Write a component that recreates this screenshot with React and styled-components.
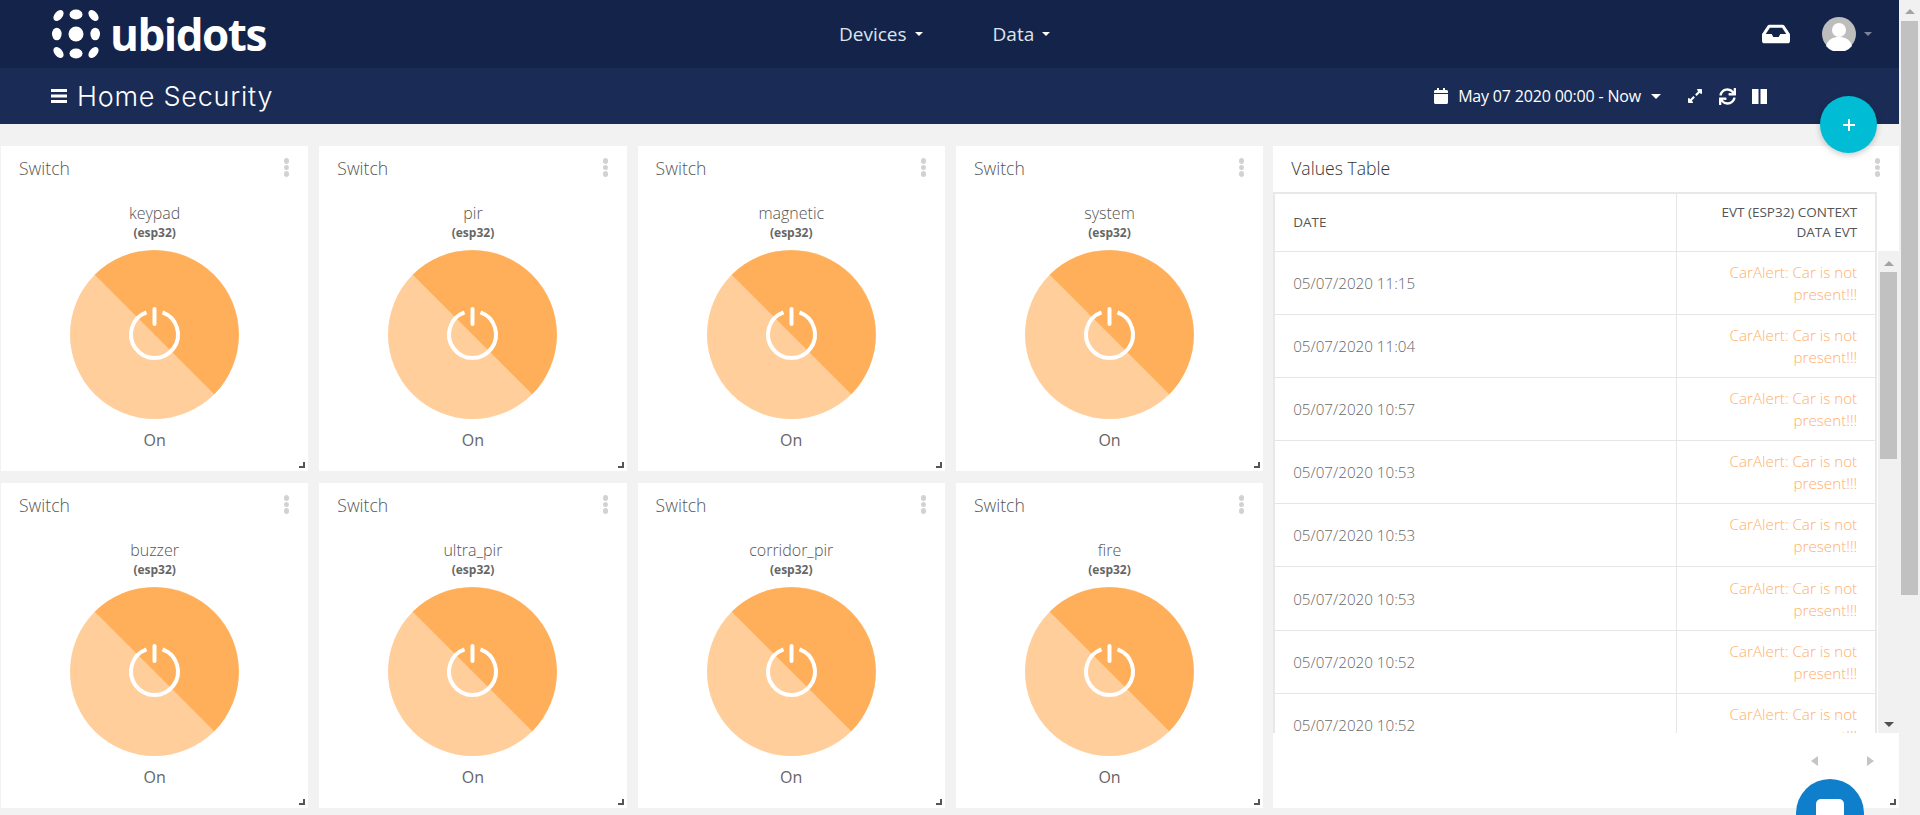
import React from "react";
import styled, { createGlobalStyle } from "styled-components";
import { FaCalendar, FaExpandAlt, FaSync, FaInbox } from "react-icons/fa";

const GlobalStyle = createGlobalStyle`
  html, body {
    margin: 0;
    height: 100%;
    overflow: hidden;
    background: #f2f2f2;
    font-family: "Open Sans", "Liberation Sans", sans-serif;
  }
  * { box-sizing: border-box; }
`;

const Viewport = styled.div`
  display: flex;
  height: 815px;
  overflow: hidden;
`;

const Page = styled.div`
  position: relative;
  width: 1899px;
  flex: none;
  background: #f2f2f2;
`;

const TopNav = styled.header`
  display: flex;
  align-items: center;
  height: 68px;
  padding: 0 27px 0 52px;
  background: #13234a;
`;

const Logo = styled.div`
  display: flex;
  align-items: center;
  gap: 10px;
  width: 787px;
  flex: none;
`;

const LogoText = styled.span`
  font-family: "Open Sans", sans-serif;
  font-weight: 700;
  font-size: 44px;
  line-height: 68px;
  letter-spacing: -1.5px;
  color: #fff;
`;

const NavMenu = styled.nav`
  display: flex;
  gap: 70px;
`;

const NavItem = styled.span`
  display: flex;
  align-items: center;
  gap: 8px;
  font-size: 19px;
  color: #dfe3ea;
`;

const Caret = styled.span`
  width: 0;
  height: 0;
  border-left: ${(props) => props.size || 4}px solid transparent;
  border-right: ${(props) => props.size || 4}px solid transparent;
  border-top: ${(props) => props.size || 4}px solid ${(props) => props.color || "#fff"};
`;

const NavRight = styled.div`
  display: flex;
  align-items: center;
  margin-left: auto;
  gap: 32px;
`;

const Avatar = styled.div`
  display: flex;
  align-items: center;
  gap: 8px;
`;

const SubNav = styled.div`
  display: flex;
  align-items: center;
  height: 56px;
  padding: 0 132px 0 51px;
  background: #1a2c56;
`;

const Title = styled.h1`
  display: flex;
  align-items: center;
  gap: 10px;
  margin: 0;
  font-family: "Inter", sans-serif;
  font-size: 27px;
  font-weight: 300;
  letter-spacing: 0.75px;
  color: #fff;
`;

const SubActions = styled.div`
  display: flex;
  align-items: center;
  margin-left: auto;
`;

const DateRange = styled.div`
  display: flex;
  align-items: center;
  gap: 9px;
  margin-right: 26px;
  font-size: 16px;
  font-weight: 500;
  color: #fff;
  letter-spacing: -0.18px;
`;

const DateCaret = styled(Caret)`
  margin-left: 1px;
`;

const IconRow = styled.div`
  display: flex;
  align-items: center;
  gap: 16px;
`;

const Fab = styled.div`
  position: absolute;
  left: 1820px;
  top: 96px;
  display: flex;
  align-items: center;
  justify-content: center;
  width: 57px;
  height: 57px;
  border-radius: 50%;
  background: #00bcd4;
  box-shadow: 0 2px 6px rgba(0, 0, 0, 0.22);
  z-index: 3;
`;

const Board = styled.main`
  display: grid;
  grid-template-columns: repeat(4, 307.3px) 624.8px;
  grid-template-rows: 325px 325px;
  column-gap: 11px;
  row-gap: 12px;
  padding: 22px 0 0 1px;
`;

const Card = styled.section`
  position: relative;
  display: flex;
  flex-direction: column;
  align-items: center;
  background: #fff;
`;

const CardHeader = styled.div`
  display: flex;
  align-items: center;
  justify-content: space-between;
  align-self: stretch;
  height: 43px;
  padding: 0 19px 0 18px;
  font-size: 17.6px;
  font-weight: 300;
  color: ${(props) => (props.$dark ? "#333" : "#555")};
`;

const Dots = styled.span`
  display: flex;
  flex-direction: column;
  gap: 1px;
  & > i {
    width: 5px;
    height: 5.5px;
    border-radius: 50%;
    background: #d2d2d2;
  }
`;

const VarName = styled.div`
  margin-top: 12px;
  font-size: 16px;
  line-height: 24px;
  font-weight: 300;
  color: #555;
`;

const DeviceName = styled.div`
  font-size: 12px;
  line-height: 16px;
  font-weight: 700;
  color: #666;
`;

const SwitchWrap = styled.div`
  margin-top: 9px;
  width: 169px;
  height: 169px;
`;

const State = styled.div`
  margin-top: 9px;
  font-size: 16px;
  line-height: 24px;
  color: #666;
`;

const ResizeHandle = styled.span`
  position: absolute;
  right: 3px;
  bottom: 3px;
  width: 6px;
  height: 6px;
  border-right: 2px solid #555;
  border-bottom: 2px solid #555;
`;

const TableCard = styled(Card)`
  grid-column: 5;
  grid-row: 1 / span 2;
  align-items: stretch;
  margin-left: -1px;
`;

const TableWrap = styled.div`
  position: relative;
  height: 541px;
  margin: 3px 0 0 0;
  overflow: hidden;
`;

const ValuesTable = styled.table`
  width: 604px;
  border-collapse: collapse;
  table-layout: fixed;
  font-size: 15.2px;
  border: 2px solid #e8e8e8;
  & th, & td {
    border: 1px solid #e6e6e6;
    padding: 0 18px;
  }
  & th {
    height: 58px;
    font-size: 13.5px;
    line-height: 20px;
    font-weight: 400;
    color: #555;
    text-transform: uppercase;
  }
  & td {
    height: 63.2px;
    line-height: 22px;
    font-weight: 300;
    color: #666;
  }
`;

const DateCol = styled.col`
  width: 402px;
`;

const HeadLeft = styled.th`
  text-align: left;
`;

const HeadRight = styled.th`
  text-align: right;
`;

const AlertCell = styled.td`
  text-align: right;
  && { color: #ffaf6c; }
`;

const InnerScrollbar = styled.div`
  position: absolute;
  left: 605px;
  top: 105px;
  width: 21px;
  height: 482px;
  display: flex;
  flex-direction: column;
  align-items: center;
  padding-top: 10px;
  background: #f1f1f1;
`;

const Thumb = styled.div`
  margin-top: ${(props) => props.$offset}px;
  width: 17px;
  height: ${(props) => props.$height}px;
  flex: none;
  background: #c1c1c1;
`;

const ArrowUp = styled.span`
  width: 0;
  height: 0;
  flex: none;
  border-left: 5px solid transparent;
  border-right: 5px solid transparent;
  border-bottom: 5px solid #a3a3a3;
`;

const ArrowDown = styled.span`
  width: 0;
  height: 0;
  flex: none;
  margin-top: auto;
  margin-bottom: 6px;
  border-left: 5px solid transparent;
  border-right: 5px solid transparent;
  border-top: 5px solid #505050;
`;

const Pager = styled.div`
  display: flex;
  justify-content: flex-end;
  gap: 49px;
  padding: 23px 25px 0 0;
`;

const PagerArrow = styled.span`
  width: 0;
  height: 0;
  border-top: 5.5px solid transparent;
  border-bottom: 5.5px solid transparent;
  ${(props) => (props.$left ? "border-right: 7px solid #c4c4c4;" : "border-left: 7px solid #c4c4c4;")}
`;

const ChatBubble = styled.div`
  position: absolute;
  left: 1796px;
  top: 779px;
  display: flex;
  justify-content: center;
  padding-top: 20px;
  width: 68px;
  height: 68px;
  border-radius: 50%;
  background: #0f7fcc;
  z-index: 3;
  & > i {
    width: 28px;
    height: 28px;
    border-radius: 5px;
    background: #fff;
  }
`;

const PageScrollbar = styled.div`
  width: 21px;
  flex: none;
  display: flex;
  flex-direction: column;
  align-items: center;
  padding-top: 9px;
  background: #f1f1f1;
`;

const switches = ["keypad", "pir", "magnetic", "system", "buzzer", "ultra_pir", "corridor_pir", "fire"];
const rows = ["11:15", "11:04", "10:57", "10:53", "10:53", "10:53", "10:52", "10:52"];

function LogoMark() {
  return (
    <svg width="48" height="50" viewBox="0 0 48 50">
      <circle cx="24" cy="25" r="7.5" fill="#fff" />
      <ellipse cx="24" cy="5.5" rx="6.5" ry="5" fill="#fff" />
      <ellipse cx="24" cy="44.5" rx="6.5" ry="5" fill="#fff" />
      <ellipse cx="4.8" cy="25" rx="4.8" ry="6.3" fill="#fff" />
      <ellipse cx="43.2" cy="25" rx="4.8" ry="6.3" fill="#fff" />
      <ellipse cx="6.5" cy="6.5" rx="6.3" ry="4" fill="#fff" transform="rotate(-50 6.5 6.5)" />
      <ellipse cx="41.5" cy="6.5" rx="6.3" ry="4" fill="#fff" transform="rotate(50 41.5 6.5)" />
      <ellipse cx="6.5" cy="43.5" rx="6.3" ry="4" fill="#fff" transform="rotate(50 6.5 43.5)" />
      <ellipse cx="41.5" cy="43.5" rx="6.3" ry="4" fill="#fff" transform="rotate(-50 41.5 43.5)" />
    </svg>
  );
}

function PowerSwitch() {
  return (
    <svg width="169" height="169" viewBox="0 0 169 169">
      <circle cx="84.5" cy="84.5" r="84.5" fill="#ffce9b" />
      <path d="M24.75 24.75 A84.5 84.5 0 0 1 144.25 144.25 Z" fill="#ffaf59" />
      <path d="M76.5 62.4 A23.5 23.5 0 1 0 92.5 62.4" fill="none" stroke="#fff" strokeWidth="4" />
      <line x1="84.5" y1="59" x2="84.5" y2="74" stroke="#fff" strokeWidth="4" strokeLinecap="round" />
    </svg>
  );
}

function SwitchCard({ name }) {
  return (
    <Card>
      <CardHeader>
        Switch
        <Dots><i /><i /><i /></Dots>
      </CardHeader>
      <VarName>{name}</VarName>
      <DeviceName>(esp32)</DeviceName>
      <SwitchWrap><PowerSwitch /></SwitchWrap>
      <State>On</State>
      <ResizeHandle />
    </Card>
  );
}

function App() {
  return (
    <Viewport>
      <GlobalStyle />
      <Page>
        <TopNav>
          <Logo>
            <LogoMark />
            <LogoText>ubidots</LogoText>
          </Logo>
          <NavMenu>
            <NavItem>Devices <Caret /></NavItem>
            <NavItem>Data <Caret /></NavItem>
          </NavMenu>
          <NavRight>
            <FaInbox size={28} color="#fff" />
            <Avatar>
              <svg width="34" height="34" viewBox="0 0 34 34">
                <circle cx="17" cy="17" r="17" fill="#bdbdbd" />
                <circle cx="17" cy="13" r="7" fill="#fff" />
                <path d="M4 29c2-7 7-9 13-9s11 2 13 9a17 17 0 0 1-26 0z" fill="#fff" />
              </svg>
              <Caret size={4.5} color="#7b8499" />
            </Avatar>
          </NavRight>
        </TopNav>
        <SubNav>
          <Title>
            <svg width="16" height="14" viewBox="0 0 16 14">
              <path d="M0 0h16v3H0zM0 5.5h16v3H0zM0 11h16v3H0z" fill="#fff" />
            </svg>
            Home Security
          </Title>
          <SubActions>
            <DateRange>
              <FaCalendar size={16} color="#fff" />
              May 07 2020 00:00 - Now
              <DateCaret size={5} />
            </DateRange>
            <IconRow>
              <FaExpandAlt size={16} color="#fff" />
              <FaSync size={17} color="#fff" />
              <svg width="15" height="15" viewBox="0 0 15 15">
                <path d="M0 0h6.5v15H0zM8.5 0H15v15H8.5z" fill="#fff" />
              </svg>
            </IconRow>
          </SubActions>
        </SubNav>
        <Fab>
          <svg width="12" height="12" viewBox="0 0 12 12">
            <path d="M5 0h2v5h5v2H7v5H5V7H0V5h5z" fill="#fff" />
          </svg>
        </Fab>
        <Board>
          {switches.map((name) => (
            <SwitchCard key={name} name={name} />
          ))}
          <TableCard>
            <CardHeader $dark>
              Values Table
              <Dots><i /><i /><i /></Dots>
            </CardHeader>
            <TableWrap>
              <ValuesTable>
                <colgroup><DateCol /><col /></colgroup>
                <thead>
                  <tr>
                    <HeadLeft>Date</HeadLeft>
                    <HeadRight>evt (esp32) context data evt</HeadRight>
                  </tr>
                </thead>
                <tbody>
                  {rows.map((time, i) => (
                    <tr key={i}>
                      <td>05/07/2020 {time}</td>
                      <AlertCell>CarAlert: Car is not present!!!</AlertCell>
                    </tr>
                  ))}
                </tbody>
              </ValuesTable>
            </TableWrap>
            <InnerScrollbar>
              <ArrowUp />
              <Thumb $offset={6} $height={187} />
              <ArrowDown />
            </InnerScrollbar>
            <Pager>
              <PagerArrow $left />
              <PagerArrow />
            </Pager>
            <ResizeHandle />
          </TableCard>
        </Board>
        <ChatBubble><i /></ChatBubble>
      </Page>
      <PageScrollbar>
        <ArrowUp />
        <Thumb $offset={7} $height={574} />
      </PageScrollbar>
    </Viewport>
  );
}

export default App;
